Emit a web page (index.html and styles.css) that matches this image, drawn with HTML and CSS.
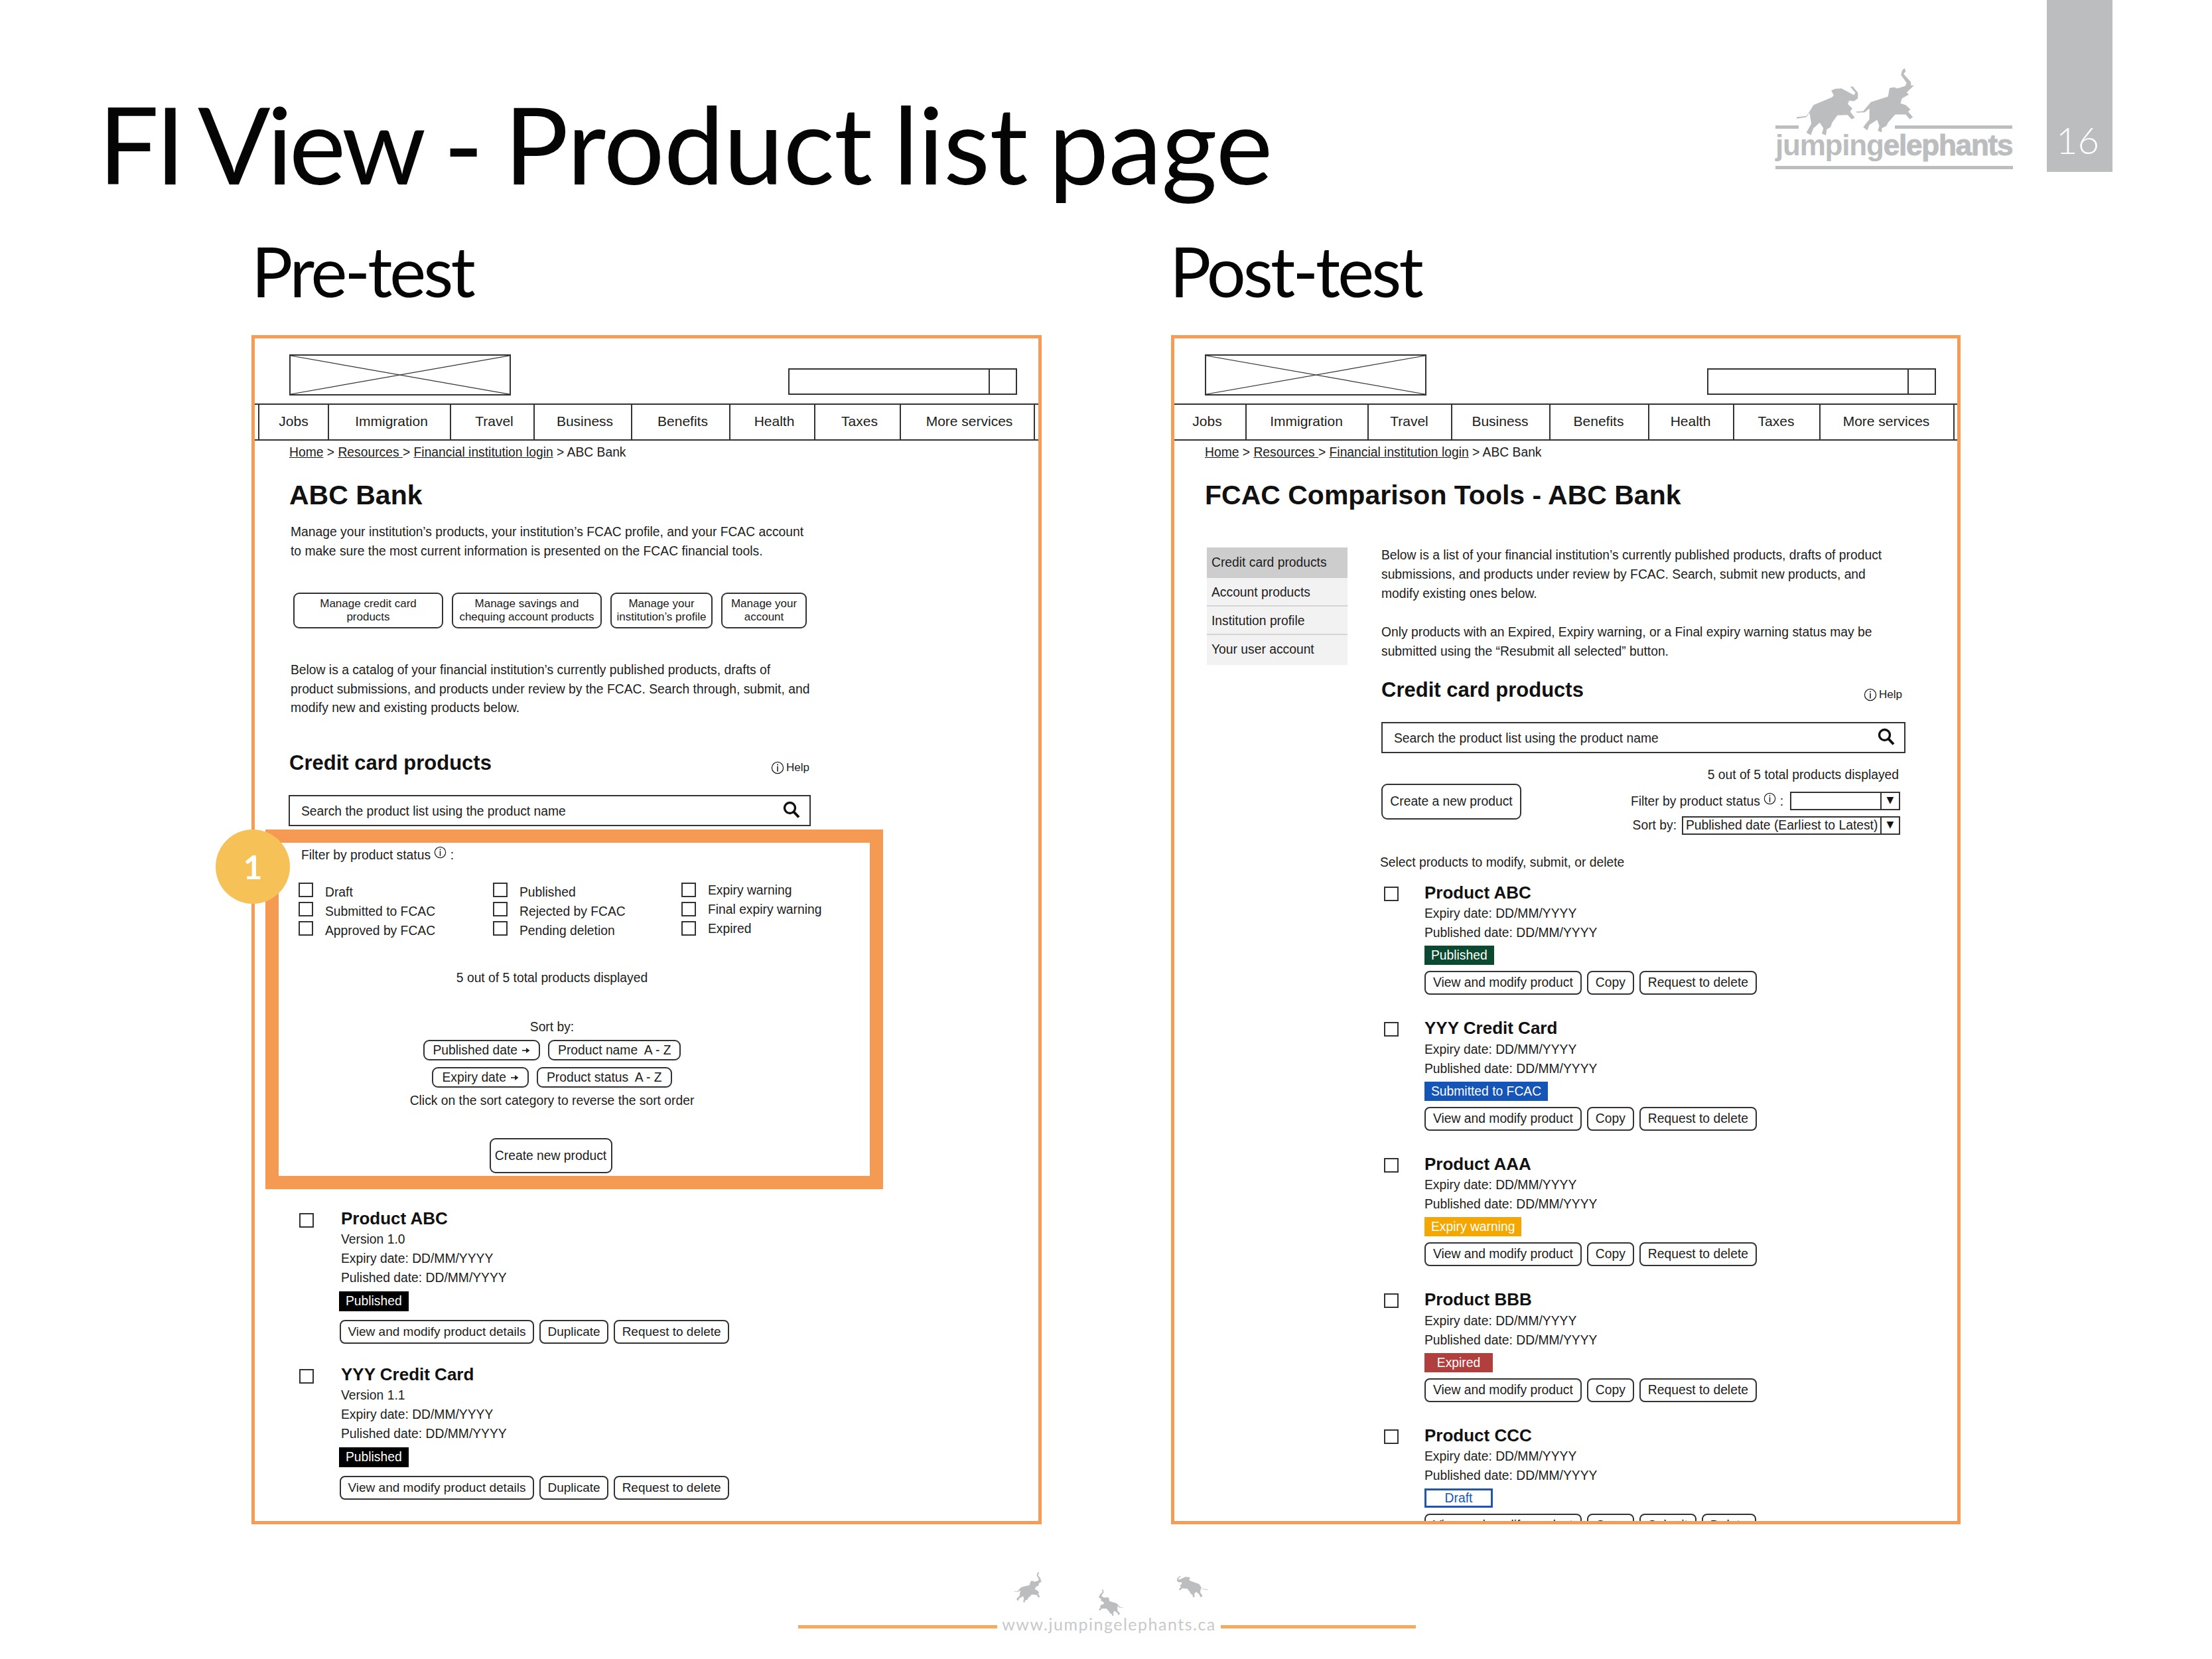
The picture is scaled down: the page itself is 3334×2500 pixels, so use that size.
FILE: index.html
```html
<!DOCTYPE html>
<html lang="en">
<head>
<meta charset="utf-8">
<title>FI View - Product list page</title>
<link rel="stylesheet" href="styles.css">
</head>
<body>
<svg class="defs" width="0" height="0" aria-hidden="true">
  <defs>
    <path id="eleA" d="M230 530 L262 525 L272 505 L285 475 L345 440 L350 430 L342 410 L355 402 L375 400 L415 430 L420 420 L403 392 L412 392 L428 420 L428 445 L415 458 L400 455 L395 472 L380 466 L395 470 L410 490 L403 505 L418 532 L408 540 L395 520 L362 522 L345 555 L340 575 L328 585 L325 612 L312 605 L317 580 L305 555 L285 580 L276 612 L262 600 L278 560 L272 510 L262 530 L232 537 Z"/>
    <path id="eleB" d="M422 505 L445 503 L470 462 L525 437 L530 398 L545 395 L555 400 L580 390 L585 375 L567 340 L570 320 L578 308 L582 322 L575 335 L598 370 L600 388 L610 385 L585 418 L592 428 L570 445 L565 468 L582 475 L597 495 L590 505 L605 530 L595 540 L582 518 L548 518 L525 555 L520 570 L505 580 L505 598 L492 592 L497 570 L490 542 L465 565 L458 590 L445 575 L465 540 L465 490 L450 508 L425 510 Z"/>
    <symbol id="info" viewBox="0 0 20 20"><circle cx="10" cy="10" r="8.6" fill="none" stroke="#222" stroke-width="1.3"/><rect x="9.2" y="4.4" width="1.6" height="1.8" fill="#222"/><rect x="9.2" y="7.6" width="1.6" height="8" fill="#222"/></symbol>
    <symbol id="loupe" viewBox="0 0 26 26"><circle cx="10.5" cy="10.5" r="8" fill="none" stroke="#111" stroke-width="3.4"/><path d="M16.5 16.5 L24 24.5" stroke="#111" stroke-width="4" fill="none"/></symbol>
    <symbol id="arrow" viewBox="0 0 12 10"><path d="M0 5 H7" stroke="#222" stroke-width="1.6"/><path d="M6 1 L11.5 5 L6 9 Z" fill="#222"/></symbol>
    <symbol id="cross" viewBox="0 0 330 58" preserveAspectRatio="none"><path d="M0 0 L330 58 M330 0 L0 58" stroke="#333" stroke-width="1.2" fill="none"/></symbol>
  </defs>
</svg>

<div class="slide">
  <header class="top">
    <h1 class="slide-title"><span class="title-tight">FI View</span> - Product list page</h1>
    <div class="brand">
      <div class="logo">
        <svg class="logo-art" width="358" height="102" viewBox="0 0 358 102">
          <g class="grey" transform="translate(-76 -102) scale(.468 .333)"><use href="#eleA"/><use href="#eleB"/></g>
          <rect class="grey" x="0" y="87" width="35" height="5"/>
          <rect class="grey" x="180" y="87" width="177" height="5"/>
        </svg>
        <div class="logo-text">jumping<span class="logo-strong">elephants</span></div>
        <div class="logo-rule"></div>
      </div>
      <div class="page-tab">16</div>
    </div>
  </header>

  <div class="subtitles">
    <h2 class="subtitle">Pre-test</h2>
    <h2 class="subtitle">Post-test</h2>
  </div>

  <main class="panels">
    <!-- PRE-TEST -->
    <section class="panel">
      <div class="site-head">
        <svg class="ph-logo"><use href="#cross" width="100%" height="100%"/></svg>
        <div class="site-search"><span class="site-search-btn"></span></div>
      </div>
      <nav class="nav nav-stub">
        <span>Jobs</span><span>Immigration</span><span>Travel</span><span>Business</span><span>Benefits</span><span>Health</span><span>Taxes</span><span>More services</span>
      </nav>
      <div class="content">
        <div class="crumb"><u>Home</u> &gt; <u>Resources </u>&gt; <u>Financial institution login</u> &gt; ABC Bank</div>
        <h3 class="page-h">ABC Bank</h3>
        <p class="copy intro">Manage your institution’s products, your institution’s FCAC profile, and your FCAC account<br>to make sure the most current information is presented on the FCAC financial tools.</p>
        <div class="manage">
          <a class="mbtn mbtn-a">Manage credit card<br>products</a>
          <a class="mbtn mbtn-a">Manage savings and<br>chequing account products</a>
          <a class="mbtn mbtn-b">Manage your<br>institution’s profile</a>
          <a class="mbtn mbtn-c">Manage your<br>account</a>
        </div>
        <p class="copy catalog">Below is a catalog of your financial institution’s currently published products, drafts of<br>product submissions, and products under review by the FCAC. Search through, submit, and<br>modify new and existing products below.</p>
        <div class="sec-head sec-head-pre">
          <h4 class="sec-h">Credit card products</h4>
          <span class="help"><svg class="ico-help"><use href="#info"/></svg>Help</span>
        </div>
        <div class="search search-pre"><span>Search the product list using the product name</span><svg class="ico-loupe"><use href="#loupe"/></svg></div>

        <div class="highlight">
          <div class="marker">1</div>
          <div class="filter-line">Filter by product status <svg class="ico-filter"><use href="#info"/></svg> :</div>
          <div class="statuses">
            <div class="status-col">
              <label class="status"><i class="box"></i><span>Draft</span></label>
              <label class="status"><i class="box"></i><span>Submitted to FCAC</span></label>
              <label class="status"><i class="box"></i><span>Approved by FCAC</span></label>
            </div>
            <div class="status-col">
              <label class="status"><i class="box"></i><span>Published</span></label>
              <label class="status"><i class="box"></i><span>Rejected by FCAC</span></label>
              <label class="status"><i class="box"></i><span>Pending deletion</span></label>
            </div>
            <div class="status-col status-raised">
              <label class="status"><i class="box"></i><span>Expiry warning</span></label>
              <label class="status"><i class="box"></i><span>Final expiry warning</span></label>
              <label class="status"><i class="box"></i><span>Expired</span></label>
            </div>
          </div>
          <div class="center-col">
            <div class="line count">5 out of 5 total products displayed</div>
            <div class="line sortby">Sort by:</div>
            <div class="sort-row sort-row-1"><a class="sbtn">Published date <svg class="ico-arrow"><use href="#arrow"/></svg></a><a class="sbtn">Product name&nbsp; A - Z</a></div>
            <div class="sort-row sort-row-2"><a class="sbtn">Expiry date <svg class="ico-arrow"><use href="#arrow"/></svg></a><a class="sbtn">Product status&nbsp; A - Z</a></div>
            <div class="line sortnote">Click on the sort category to reverse the sort order</div>
            <a class="create create-pre">Create new product</a>
          </div>
        </div>

        <article class="prod prod-pre">
          <i class="box prod-box"></i>
          <div>
            <div class="prod-name">Product ABC</div>
            <div class="meta">Version 1.0</div>
            <div class="meta">Expiry date: DD/MM/YYYY</div>
            <div class="meta">Pulished date: DD/MM/YYYY</div>
            <div class="badge b-black">Published</div>
            <div class="acts"><a class="abtn">View and modify product details</a><a class="abtn">Duplicate</a><a class="abtn">Request to delete</a></div>
          </div>
        </article>
        <article class="prod prod-pre">
          <i class="box prod-box"></i>
          <div>
            <div class="prod-name">YYY Credit Card</div>
            <div class="meta">Version 1.1</div>
            <div class="meta">Expiry date: DD/MM/YYYY</div>
            <div class="meta">Pulished date: DD/MM/YYYY</div>
            <div class="badge b-black">Published</div>
            <div class="acts"><a class="abtn">View and modify product details</a><a class="abtn">Duplicate</a><a class="abtn">Request to delete</a></div>
          </div>
        </article>
      </div>
    </section>

    <!-- POST-TEST -->
    <section class="panel panel-clip">
      <div class="site-head site-head-post">
        <svg class="ph-logo"><use href="#cross" width="100%" height="100%"/></svg>
        <div class="site-search"><span class="site-search-btn"></span></div>
      </div>
      <nav class="nav nav-post">
        <span>Jobs</span><span>Immigration</span><span>Travel</span><span>Business</span><span>Benefits</span><span>Health</span><span>Taxes</span><span>More services</span>
      </nav>
      <div class="content content-post">
        <div class="crumb"><u>Home</u> &gt; <u>Resources </u>&gt; <u>Financial institution login</u> &gt; ABC Bank</div>
        <h3 class="page-h">FCAC Comparison Tools - ABC Bank</h3>
        <div class="two-col">
          <ul class="side">
            <li class="side-on">Credit card products</li>
            <li>Account products</li>
            <li>Institution profile</li>
            <li>Your user account</li>
          </ul>
          <div class="main-col">
            <p class="copy copy-post">Below is a list of your financial institution’s currently published products, drafts of product<br>submissions, and products under review by FCAC. Search, submit new products, and<br>modify existing ones below.</p>
            <p class="copy copy-post copy-gap">Only products with an Expired, Expiry warning, or a Final expiry warning status may be<br>submitted using the “Resubmit all selected” button.</p>
            <div class="sec-head sec-head-post">
              <h4 class="sec-h">Credit card products</h4>
              <span class="help"><svg class="ico-help"><use href="#info"/></svg>Help</span>
            </div>
            <div class="search search-post"><span>Search the product list using the product name</span><svg class="ico-loupe"><use href="#loupe"/></svg></div>
            <div class="tools">
              <a class="create create-post">Create a new product</a>
              <div class="tools-right">
                <div class="line tool-count">5 out of 5 total products displayed</div>
                <div class="tool-row tool-filter">
                  <span class="tool-label">Filter by product status <svg class="ico-filter"><use href="#info"/></svg> :</span>
                  <div class="select select-short"><span class="select-val"></span><span class="select-arrow">▼</span></div>
                </div>
                <div class="tool-row tool-sort">
                  <span class="tool-label">Sort by:</span>
                  <div class="select select-long"><span class="select-val">Published date (Earliest to Latest)</span><span class="select-arrow">▼</span></div>
                </div>
              </div>
            </div>
            <div class="line select-note">Select products to modify, submit, or delete</div>

            <article class="prod prod-post">
              <i class="box prod-box"></i>
              <div>
                <div class="prod-name">Product ABC</div>
                <div class="meta">Expiry date: DD/MM/YYYY</div>
                <div class="meta">Published date: DD/MM/YYYY</div>
                <div class="badge b-green">Published</div>
                <div class="acts"><a class="abtn">View and modify product</a><a class="abtn">Copy</a><a class="abtn">Request to delete</a></div>
              </div>
            </article>
            <article class="prod prod-post">
              <i class="box prod-box"></i>
              <div>
                <div class="prod-name">YYY Credit Card</div>
                <div class="meta">Expiry date: DD/MM/YYYY</div>
                <div class="meta">Published date: DD/MM/YYYY</div>
                <div class="badge b-blue">Submitted to FCAC</div>
                <div class="acts"><a class="abtn">View and modify product</a><a class="abtn">Copy</a><a class="abtn">Request to delete</a></div>
              </div>
            </article>
            <article class="prod prod-post">
              <i class="box prod-box"></i>
              <div>
                <div class="prod-name">Product AAA</div>
                <div class="meta">Expiry date: DD/MM/YYYY</div>
                <div class="meta">Published date: DD/MM/YYYY</div>
                <div class="badge b-amber">Expiry warning</div>
                <div class="acts"><a class="abtn">View and modify product</a><a class="abtn">Copy</a><a class="abtn">Request to delete</a></div>
              </div>
            </article>
            <article class="prod prod-post">
              <i class="box prod-box"></i>
              <div>
                <div class="prod-name">Product BBB</div>
                <div class="meta">Expiry date: DD/MM/YYYY</div>
                <div class="meta">Published date: DD/MM/YYYY</div>
                <div class="badge b-red">Expired</div>
                <div class="acts"><a class="abtn">View and modify product</a><a class="abtn">Copy</a><a class="abtn">Request to delete</a></div>
              </div>
            </article>
            <article class="prod prod-post">
              <i class="box prod-box"></i>
              <div>
                <div class="prod-name">Product CCC</div>
                <div class="meta">Expiry date: DD/MM/YYYY</div>
                <div class="meta">Published date: DD/MM/YYYY</div>
                <div class="badge b-draft">Draft</div>
                <div class="acts"><a class="abtn">View and modify product</a><a class="abtn">Copy</a><a class="abtn">Submit</a><a class="abtn">Delete</a></div>
              </div>
            </article>
          </div>
        </div>
      </div>
    </section>
  </main>

  <footer class="foot">
    <svg class="foot-art" width="291" height="68" viewBox="0 0 291 68">
      <g class="grey">
        <g transform="rotate(6 20 24) translate(-92 -51) scale(.218 .166)"><use href="#eleB"/></g>
        <g transform="translate(249.2 -14.5) scale(-.202 .138)"><use href="#eleB"/></g>
        <g transform="translate(344.4 -48.8) scale(-.232 .145)"><use href="#eleA"/></g>
      </g>
    </svg>
    <div class="foot-row">
      <span class="foot-rule foot-rule-a"></span>
      <span class="foot-url">www.jumpingelephants.ca</span>
      <span class="foot-rule foot-rule-b"></span>
    </div>
  </footer>
</div>
</body>
</html>
```
FILE: styles.css
```css
* { box-sizing: border-box; }
html, body { margin: 0; padding: 0; background: #fff; }
body { font-family: "Liberation Sans", Arial, sans-serif; color: #1c1c1c; font-size: 19.3px; }
.defs { position: absolute; }
h1, h2, h3, h4, p, ul { margin: 0; padding: 0; }
a { color: inherit; }
.grey { fill: #bcbdbf; }

.slide { width: 3334px; height: 2500px; overflow: hidden; }

/* header */
.top { display: flex; justify-content: space-between; height: 294px; padding: 0 150px 0 148px; }
.slide-title { height: 160px; margin-top: 136px; font: 400 162px/160px Lato, "Open Sans", sans-serif; color: #050505; letter-spacing: -.7px; word-spacing: -9px; white-space: nowrap; }
.title-tight { letter-spacing: -5.5px; word-spacing: -6px; }
.brand { display: flex; gap: 51px; align-items: flex-start; }
.logo { width: 358px; margin-top: 102px; }
.logo-art { display: block; overflow: visible; }
.logo-text { margin-top: -6px; height: 41px; font: 700 44px/41px "Liberation Sans", Arial, sans-serif; letter-spacing: -1.2px; color: #bcbdbf; white-space: nowrap; }
.logo-strong { -webkit-text-stroke: 1px #bcbdbf; }
.logo-rule { margin-top: 11px; height: 5px; background: #bcbdbf; }
.page-tab { width: 99px; height: 259px; background: #bcbdbf; color: #fff; display: flex; align-items: flex-end; justify-content: center; padding: 0 6px 20px 0; font: 300 56px/56px Lato, sans-serif; }

.subtitles { display: grid; grid-template-columns: 1384px 1fr; margin: 61px 0 0 379px; }
.subtitle { font: 400 104px/106px Lato, "Open Sans", sans-serif; color: #050505; letter-spacing: -3.9px; height: 106px; white-space: nowrap; }

/* panels */
.panels { display: grid; grid-template-columns: 1191px 1190px; gap: 195px; margin: 44px 0 0 379px; }
.panel { position: relative; height: 1792px; border: 5px solid #f79c57; background: #fff; }
.panel-clip { overflow: hidden; }

.site-head { display: flex; justify-content: space-between; align-items: flex-end; height: 86px; padding: 24px 32px 0 52px; }
.site-head-post { padding-left: 46px; }
.ph-logo { display: block; width: 334px; height: 62px; border: 2px solid #333; }
.site-search { width: 345px; height: 40px; border: 2px solid #333; margin-bottom: 1px; display: flex; justify-content: flex-end; }
.site-search-btn { width: 41px; border-left: 2px solid #333; }

.nav { display: grid; grid-template-columns: 107px 184px 126px 147px 148px 128px 129px 202px; height: 56px; margin-top: 12px; border-top: 2px solid #333; border-bottom: 2px solid #333; }
.nav span { display: flex; align-items: center; justify-content: center; padding: 0 0 3px 6px; border-right: 2px solid #333; font-size: 21px; }
.nav-stub { padding-left: 5px; }
.nav-stub span:first-child { border-left: 2px solid #333; padding-left: 0; }
.nav-post { grid-template-columns: 109px 184px 126px 148px 149px 128px 130px 202px; }
.nav-post span { padding: 0 2px 3px 0; }
.nav-post span:first-child { padding-right: 8px; }

.content { padding-left: 52px; }
.content-post { padding-left: 46px; }
.crumb { margin-top: 6px; line-height: 24px; white-space: nowrap; }
.page-h { margin-top: 28px; font-size: 41px; line-height: 48px; font-weight: 700; color: #111; white-space: nowrap; }
.copy { line-height: 29px; white-space: nowrap; }
.intro { margin: 16.5px 0 0 2px; }

.manage { display: flex; margin: 48.5px 0 0 6px; gap: 13px; }
.mbtn { display: flex; align-items: center; justify-content: center; text-align: center; height: 54px; border: 2px solid #333; border-radius: 9px; font-size: 17px; line-height: 20px; }
.mbtn-a { width: 226px; }
.mbtn-b { width: 154px; }
.mbtn-c { width: 129px; }
.catalog { margin: 49px 0 0 2px; line-height: 28.5px; }

.sec-head { display: flex; justify-content: space-between; align-items: flex-end; }
.sec-head-pre { width: 784px; margin-top: 50.5px; }
.sec-head-post { width: 785px; margin-top: 26px; }
.sec-h { font-size: 31px; line-height: 36px; font-weight: 700; color: #111; white-space: nowrap; }
.help { display: flex; align-items: center; gap: 3px; font-size: 17px; line-height: 22px; }
.ico-help { width: 20px; height: 20px; }

.search { display: flex; align-items: center; justify-content: space-between; height: 47px; border: 2px solid #333; padding: 2px 14px 0 17px; }
.search-pre { width: 787px; margin: 30px 0 0 -1px; }
.search-post { width: 790px; margin-top: 30px; }
.ico-loupe { width: 26px; height: 26px; margin-bottom: 6px; }

/* highlighted filter box */
.highlight { position: relative; width: 931px; height: 542px; margin: 5px 0 0 -36px; border: 20px solid #f49a52; background: #fff; }
.marker { position: absolute; left: -95px; top: -20px; width: 112px; height: 112px; border-radius: 50%; background: #f6c157; color: #fff; display: flex; align-items: center; justify-content: center; font: 700 50px/1 Lato, sans-serif; }
.filter-line { margin: 5px 0 0 34px; line-height: 24px; }
.ico-filter { width: 19px; height: 19px; vertical-align: 1px; }
.statuses { display: grid; grid-template-columns: 293px 284px 1fr; margin: 29px 0 0 30px; }
.status { display: flex; gap: 18px; height: 29px; line-height: 29px; white-space: nowrap; }
.status-raised .status span { margin-top: -3px; }
.box { display: block; flex: none; width: 22px; height: 22px; border: 2px solid #333; background: #fff; }
.center-col { width: 824px; display: flex; flex-direction: column; align-items: center; }
.line { line-height: 24px; white-space: nowrap; }
.count { margin-top: 45px; }
.sortby { margin-top: 50px; }
.sort-row { display: flex; gap: 12px; }
.sort-row-1 { margin-top: 7px; }
.sort-row-2 { margin-top: 10px; }
.sbtn { display: flex; align-items: center; justify-content: center; gap: 7px; height: 31px; border: 2px solid #333; border-radius: 9px; padding: 0 13px; white-space: nowrap; }
.ico-arrow { width: 12px; height: 10px; }
.sortnote { margin-top: 8px; }
.create { display: flex; align-items: center; justify-content: center; width: 185px; height: 53px; margin-top: 44px; border: 2px solid #333; border-radius: 9px; white-space: nowrap; }
.create-pre { margin-right: 4px; }

/* product rows */
.prod { display: flex; }
.prod-pre { gap: 41px; margin-left: 15px; height: 235px; }
.prod-pre:first-of-type { margin-top: 29px; }
.prod-post { gap: 39px; margin-left: 4px; height: 204.5px; }
.prod-box { margin-top: 7px; }
.prod-post .prod-box { margin-top: 6px; }
.prod-name { font-size: 26px; line-height: 30px; font-weight: 700; color: #111; white-space: nowrap; }
.meta { line-height: 29px; white-space: nowrap; }
.prod-pre .prod-name { margin-bottom: 2px; }
.prod-post .prod-name { margin-bottom: 2.5px; }
.badge { min-width: 103px; padding: 0 10px; text-align: center; color: #fff; width: fit-content; white-space: nowrap; }
.prod-pre .badge { height: 30px; line-height: 30px; margin: 5.5px 0 0 -3px; }
.prod-post .badge { height: 29px; line-height: 29px; margin-top: 5px; }
.b-black { background: #000; }
.b-green { background: #0b4a30; }
.b-blue { background: #1555b8; }
.b-amber { background: #f4a700; }
.b-red { background: #b13f3d; }
.prod-post .b-draft { background: #fff; color: #1a56b8; border: 3px solid #1f55b6; line-height: 23px; }
.acts { display: flex; gap: 8px; }
.prod-pre .acts { margin: 13px 0 0 -2px; }
.prod-post .acts { margin-top: 9px; }
.abtn { display: flex; align-items: center; height: 36px; padding: 0 11px; border: 2px solid #333; border-radius: 8px; white-space: nowrap; }
.prod-pre .abtn { padding: 0 10.5px; font-size: 19px; }

/* post-test layout */
.two-col { display: flex; margin-top: 52px; padding-left: 3px; gap: 51px; }
.side { list-style: none; width: 212px; margin-top: 3px; flex: none; height: 177px; }
.side li { height: 43px; padding-left: 7px; line-height: 43px; background: #f2f2f2; border-bottom: 2px solid #d4d4d4; white-space: nowrap; }
.side li:last-child { border-bottom: 0; height: 45px; }
.side .side-on { height: 46px; line-height: 46px; background: #cdcdcd; border-bottom: 0; }
.main-col { flex: none; width: 800px; }
.copy-gap { margin-top: 29px; }
.tools { display: flex; justify-content: space-between; width: 782px; margin-top: 21px; align-items: flex-start; }
.create-post { width: 211px; height: 54px; margin-top: 25px; }
.tools-right { display: flex; flex-direction: column; align-items: flex-end; }
.tool-count { padding-right: 2px; }
.tool-row { display: flex; align-items: center; white-space: nowrap; }
.tool-filter { margin-top: 12.5px; gap: 10px; }
.tool-sort { margin-top: 9.5px; gap: 8px; }
.select { display: flex; height: 28px; border: 2px solid #333; }
.select-short { width: 166px; }
.select-long { width: 329px; }
.select-val { flex: 1; padding-left: 4px; line-height: 24px; white-space: nowrap; overflow: hidden; }
.select-arrow { width: 28px; border-left: 2px solid #333; font: 14px/20px "DejaVu Sans", sans-serif; text-align: center; color: #111; }
.select-note { margin: 30px 0 0 -2px; }
.prod-post:first-of-type { margin-top: 17.5px; }

/* footer */
.foot { margin-top: 70px; }
.foot-art { display: block; margin-left: 1529px; overflow: visible; }
.foot-row { display: flex; align-items: center; height: 30px; margin: 1px 0 0 1203px; }
.foot-rule { height: 5px; background: #f9a95c; }
.foot-rule-a { width: 300px; }
.foot-rule-b { width: 294px; }
.foot-url { width: 337px; margin-top: -8px; text-align: center; font: 400 25px/30px Lato, sans-serif; letter-spacing: 1.5px; color: #c8c9cb; white-space: nowrap; }
```
